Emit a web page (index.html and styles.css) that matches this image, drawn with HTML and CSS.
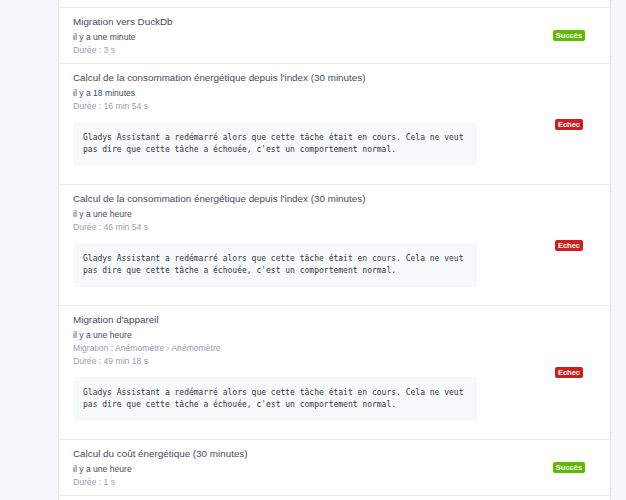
FILE: index.html
```html
<!DOCTYPE html>
<html lang="fr">
<head>
<meta charset="utf-8">
<title>Tâches en arrière-plan</title>
<link rel="stylesheet" href="styles.css">
</head>
<body>
<div class="card">
  <div class="card-top"></div>

  <div class="job">
    <div class="job-info">
      <div class="job-title">Migration vers DuckDb</div>
      <div class="job-time">il y a une minute</div>
      <div class="job-meta">Durée : 3 s</div>
    </div>
    <div class="job-status"><span class="badge badge-success">Succès</span></div>
  </div>

  <div class="job">
    <div class="job-info">
      <div class="job-title">Calcul de la consommation énergétique depuis l'index (30 minutes)</div>
      <div class="job-time">il y a 18 minutes</div>
      <div class="job-meta">Durée : 16 min 54 s</div>
      <pre class="job-error">Gladys Assistant a redémarré alors que cette tâche était en cours. Cela ne veut
pas dire que cette tâche a échouée, c'est un comportement normal.</pre>
    </div>
    <div class="job-status"><span class="badge badge-danger">Echec</span></div>
  </div>

  <div class="job">
    <div class="job-info">
      <div class="job-title">Calcul de la consommation énergétique depuis l'index (30 minutes)</div>
      <div class="job-time">il y a une heure</div>
      <div class="job-meta">Durée : 46 min 54 s</div>
      <pre class="job-error">Gladys Assistant a redémarré alors que cette tâche était en cours. Cela ne veut
pas dire que cette tâche a échouée, c'est un comportement normal.</pre>
    </div>
    <div class="job-status"><span class="badge badge-danger">Echec</span></div>
  </div>

  <div class="job">
    <div class="job-info">
      <div class="job-title">Migration d'appareil</div>
      <div class="job-time">il y a une heure</div>
      <div class="job-meta">Migration : Anémomètre › Anémomètre</div>
      <div class="job-meta">Durée : 49 min 18 s</div>
      <pre class="job-error">Gladys Assistant a redémarré alors que cette tâche était en cours. Cela ne veut
pas dire que cette tâche a échouée, c'est un comportement normal.</pre>
    </div>
    <div class="job-status"><span class="badge badge-danger">Echec</span></div>
  </div>

  <div class="job">
    <div class="job-info">
      <div class="job-title">Calcul du coût énergétique (30 minutes)</div>
      <div class="job-time">il y a une heure</div>
      <div class="job-meta">Durée : 1 s</div>
    </div>
    <div class="job-status"><span class="badge badge-success">Succès</span></div>
  </div>

  <div class="job job-empty"></div>
</div>
</body>
</html>
```
FILE: styles.css
```css
html, body {
  margin: 0;
  padding: 0;
  background: #f5f7fb;
  font-family: "Liberation Sans", Arial, sans-serif;
  color: #495057;
  height: 500px;
  overflow: hidden;
}

.card {
  margin-left: 58px;
  width: 551px;
  background: #ffffff;
  border-left: 1px solid #e3e7ee;
  border-right: 1px solid #e3e7ee;
  min-height: 520px;
}

.card-top {
  height: 7px;
}

.job {
  display: flex;
  align-items: center;
  justify-content: space-between;
  border-top: 1px solid #e9ecef;
  padding: 6px 11px 6px 14px;
}

.job-empty {
  height: 40px;
}

.job-info {
  display: flex;
  flex-direction: column;
  align-items: flex-start;
}

.job-title {
  font-size: 9.85px;
  line-height: 16px;
  color: #454d5a;
}

.job-time {
  font-size: 8.6px;
  line-height: 14px;
  color: #454d5a;
}

.job-meta {
  font-size: 8.6px;
  line-height: 13px;
  color: #9aa0ac;
}

.job-error {
  margin: 9px 0 12px;
  padding: 10px 13px 10px 10px;
  background: #f8f9fa;
  border-radius: 3px;
  font-family: "DejaVu Sans Mono", "Liberation Mono", monospace;
  font-size: 8px;
  line-height: 12px;
  color: #343a40;
  white-space: pre;
}

.job-error + * {
  margin-top: 0;
}

.job-status {
  width: 60px;
  display: flex;
  justify-content: center;
  align-items: center;
}

.badge {
  display: block;
  font-size: 7.5px;
  font-weight: bold;
  line-height: 11px;
  padding: 0 3px;
  border-radius: 2px;
  color: #ffffff;
}

.badge-success {
  background: #5eba00;
}

.badge-danger {
  background: #cd201f;
}
```
